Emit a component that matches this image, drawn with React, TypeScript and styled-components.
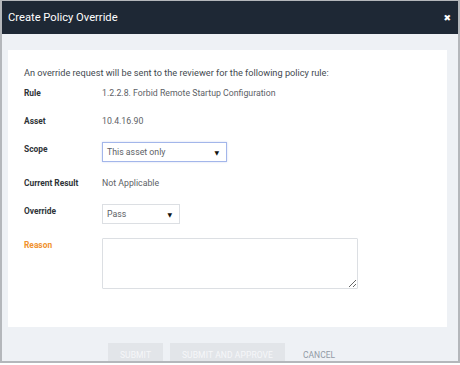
import React from "react";
import styled, { createGlobalStyle } from "styled-components";

const Global = createGlobalStyle`
  html, body { margin: 0; padding: 0; background: #ffffff; }
  body { font-family: Roboto, "Liberation Sans", Arial, sans-serif; }
  * { box-sizing: border-box; }
`;

const Frame = styled.div`
  width: 460px;
  height: 363px;
  border-style: solid;
  border-color: #b4b7bb;
  border-width: 1px 2px 2px 2px;
  background: #eef1f5;
  display: flex;
  flex-direction: column;
  overflow: hidden;
`;

const Header = styled.div`
  height: 33px;
  flex: none;
  background: #1e2835;
  display: flex;
  align-items: center;
  justify-content: space-between;
  padding: 0 7px 0 6px;
`;

const Title = styled.div`
  color: #ffffff;
  font-size: 11.2px;
  line-height: 16px;
`;

const Close = styled.div`
  color: #ffffff;
  font-size: 9px;
  line-height: 10px;
  font-family: "DejaVu Sans", sans-serif;
  font-weight: bold;
`;

const Body = styled.div`
  flex: 1;
  padding: 16px 11px 0 6px;
  display: flex;
  flex-direction: column;
`;

const Panel = styled.div`
  background: #ffffff;
  height: 277px;
  padding: 16px 16px 0 16px;
  display: flex;
  flex-direction: column;
`;

const Intro = styled.div`
  font-size: 9.2px;
  line-height: 14px;
  color: #444a50;
  margin-bottom: 6px;
`;

const Form = styled.div`
  display: flex;
  flex-direction: column;
  gap: 14px;
`;

const Row = styled.div`
  display: grid;
  grid-template-columns: 78px 1fr;
  align-items: start;
`;

const Label = styled.div<{ $accent?: boolean }>`
  font-size: 8.4px;
  line-height: 14px;
  font-weight: bold;
  color: ${(p) => (p.$accent ? "#f0922e" : "#2f3438")};
`;

const Value = styled.div`
  font-size: 8.75px;
  line-height: 14px;
  color: #5d6166;
`;

const Select = styled.div<{ $width: number; $focused?: boolean }>`
  width: ${(p) => p.$width}px;
  height: 20px;
  border: 1px solid ${(p) => (p.$focused ? "#a3b6ea" : "#dcdfe3")};
  box-shadow: ${(p) => (p.$focused ? "0 0 2px rgba(140,165,230,0.4)" : "none")};
  display: flex;
  align-items: center;
  justify-content: space-between;
  padding: 0 7px 0 4px;
  font-size: 8.75px;
  color: #5d6166;
  background: #fff;
`;

const Arrow = styled.span`
  font-size: 6px;
  color: #111;
  font-family: "DejaVu Sans", sans-serif;
`;

const TextArea = styled.textarea`
  width: 256px;
  height: 51px;
  border: 1px solid #dcdfe3;
  border-radius: 1px;
  resize: both;
  margin: 0;
  padding: 3px;
  font-family: inherit;
  font-size: 9px;
  outline: none;
`;

const Footer = styled.div`
  display: flex;
  align-items: flex-start;
  padding: 16px 0 0 100px;
  gap: 7px;
`;

const Button = styled.div<{ $width: number }>`
  width: ${(p) => p.$width}px;
  height: 24px;
  background: #e2e5e9;
  color: #f6f7f9;
  font-size: 8.5px;
  display: flex;
  align-items: center;
  justify-content: center;
  letter-spacing: 0.1px;
`;

const LinkButton = styled.div`
  height: 24px;
  margin-left: 5px;
  padding: 0 6px;
  display: flex;
  align-items: center;
  color: #929aa5;
  font-size: 8.5px;
`;

export default function App() {
  return (
    <>
      <Global />
      <Frame>
        <Header>
          <Title>Create Policy Override</Title>
          <Close>✖</Close>
        </Header>
        <Body>
          <Panel>
            <Intro>An override request will be sent to the reviewer for the following policy rule:</Intro>
            <Form>
              <Row>
                <Label>Rule</Label>
                <Value>1.2.2.8. Forbid Remote Startup Configuration</Value>
              </Row>
              <Row>
                <Label>Asset</Label>
                <Value>10.4.16.90</Value>
              </Row>
              <Row>
                <Label>Scope</Label>
                <Select $width={125} $focused>
                  <span>This asset only</span>
                  <Arrow>▼</Arrow>
                </Select>
              </Row>
              <Row>
                <Label>Current Result</Label>
                <Value>Not Applicable</Value>
              </Row>
              <Row>
                <Label>Override</Label>
                <Select $width={78}>
                  <span>Pass</span>
                  <Arrow>▼</Arrow>
                </Select>
              </Row>
              <Row>
                <Label $accent>Reason</Label>
                <TextArea />
              </Row>
            </Form>
          </Panel>
          <Footer>
            <Button $width={55}>SUBMIT</Button>
            <Button $width={115}>SUBMIT AND APPROVE</Button>
            <LinkButton>CANCEL</LinkButton>
          </Footer>
        </Body>
      </Frame>
    </>
  );
}
